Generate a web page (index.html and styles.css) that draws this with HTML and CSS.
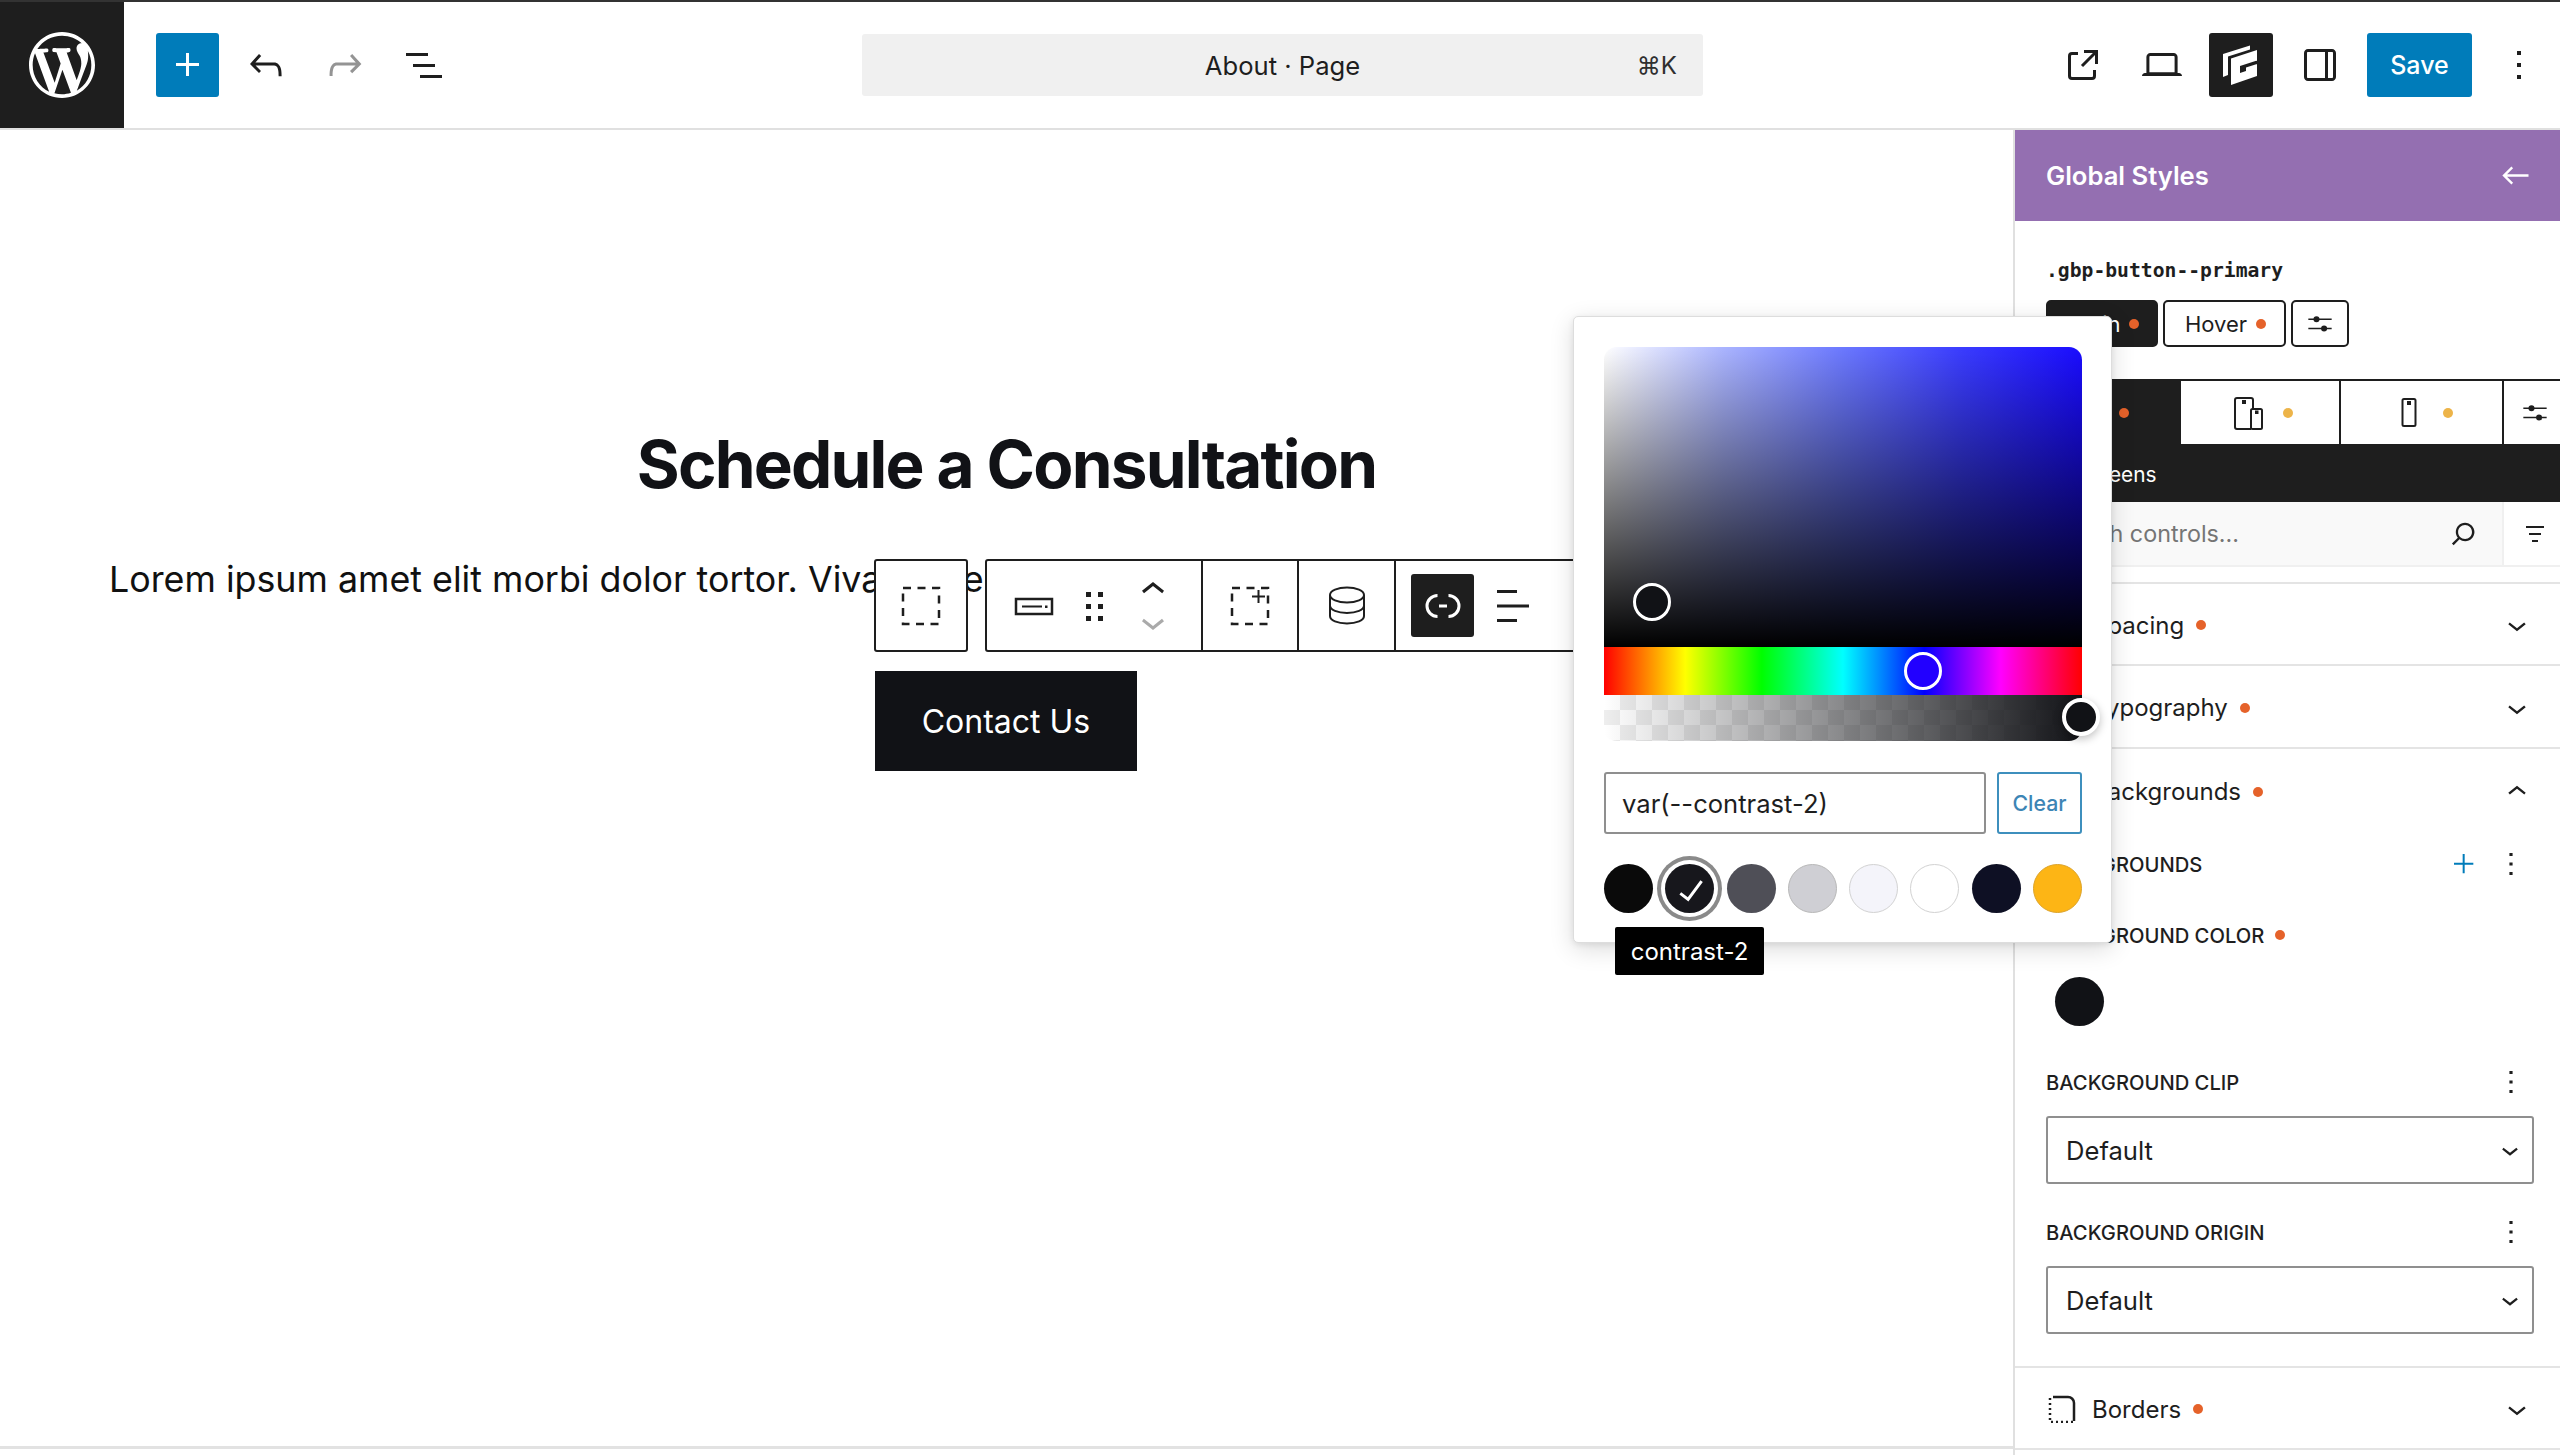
FILE: index.html
```html
<!DOCTYPE html>
<html lang="en">
<head>
<meta charset="utf-8">
<title>About · Page</title>
<link rel="stylesheet" href="styles.css">
</head>
<body>
<svg class="defs" width="0" height="0" aria-hidden="true">
  <symbol id="chev-down" viewBox="0 0 24 24"><path d="M17.5 11.6L12 16l-5.5-4.4.9-1.2L12 14l4.5-3.6 1 1.2z"/></symbol>
  <symbol id="chev-up" viewBox="0 0 24 24"><path d="M6.5 12.4L12 8l5.5 4.4-.9 1.2L12 10l-4.5 3.6-1-1.2z"/></symbol>
  <symbol id="more" viewBox="0 0 24 24"><path d="M13 19h-2v-2h2v2zm0-6h-2v-2h2v2zm0-6h-2V5h2v2z"/></symbol>
  <symbol id="sliders" viewBox="0 0 24 24"><path d="M2 7.2h20v1.300H2zM2 15.200h20v1.300H2z"/><circle cx="9" cy="7.850" r="2.600"/><circle cx="15.500" cy="15.850" r="2.600"/></symbol>
</svg>

<header class="topbar">
  <div class="wp-logo">
    <svg class="logo-mark" viewBox="0 0 20 20"><path d="M20 10c0-5.51-4.49-10-10-10C4.48 0 0 4.49 0 10c0 5.52 4.48 10 10 10 5.51 0 10-4.48 10-10zM7.78 15.37L4.37 6.22c.55-.02 1.17-.08 1.17-.08.5-.06.44-1.13-.06-1.11 0 0-1.45.11-2.37.11-.18 0-.37 0-.58-.01C4.12 2.69 6.87 1.11 10 1.11c2.33 0 4.45.87 6.05 2.34-.68-.11-1.65.39-1.65 1.58 0 .74.45 1.36.9 2.1.35.61.55 1.36.55 2.46 0 1.49-1.4 5-1.4 5l-3.03-8.37c.54-.02.82-.17.82-.17.5-.05.44-1.25-.06-1.22 0 0-1.44.12-2.38.12-.87 0-2.33-.12-2.33-.12-.5-.03-.56 1.2-.06 1.22l.92.08 1.26 3.41zM17.41 10c.24-.64.74-1.87.43-4.25.7 1.29 1.05 2.71 1.05 4.25 0 3.29-1.73 6.24-4.4 7.78.97-2.59 1.94-5.2 2.92-7.78zM6.1 18.09C3.12 16.65 1.11 13.53 1.11 10c0-1.3.23-2.48.72-3.59C3.25 10.3 4.67 14.2 6.1 18.09zm4.03-6.63l2.58 6.98c-.86.29-1.76.45-2.71.45-.79 0-1.57-.11-2.29-.33.81-2.38 1.62-4.74 2.42-7.1z"/></svg>
  </div>
  <div class="bar-left">
    <button class="ib ib-blue"><svg class="i48" viewBox="0 0 24 24"><path d="M11 12.5V17.5H12.5V12.5H17.5V11H12.5V6H11V11H6V12.5H11Z"/></svg></button>
    <button class="ib"><svg class="i48" viewBox="0 0 24 24"><path d="M18.3 11.7c-.6-.6-1.4-.9-2.3-.9H6.7l2.9-3.3-1.1-1-4.5 5L8.5 16l1-1-2.7-2.7H16c.5 0 .9.2 1.3.5 1 1 1 3.4 1 4.5v.3h1.5v-.2c0-1.5 0-4.3-1.5-5.7z"/></svg></button>
    <button class="ib ib-muted"><svg class="i48" viewBox="0 0 24 24"><path d="M15.6 6.5l-1.1 1 2.9 3.3H8c-.9 0-1.7.3-2.3.9-1.4 1.5-1.4 4.2-1.4 5.6v.2h1.5v-.3c0-1.1 0-3.5 1-4.5.3-.3.7-.5 1.3-.5h9.2L14.5 15l1.1 1.1 4.6-4.6-4.6-5z"/></svg></button>
    <button class="ib"><svg class="i48" viewBox="0 0 24 24"><path d="M3 6h11v1.5H3V6Zm3.5 5.5h11V13h-11v-1.5ZM21 17H10v1.5h11V17Z"/></svg></button>
  </div>
  <div class="doc-bar"><span class="doc-title">About · Page</span><span class="doc-key">⌘K</span></div>
  <div class="bar-right">
    <button class="ib"><svg class="i48" viewBox="0 0 24 24"><path d="M19.5 4.5h-7V6h4.44l-5.97 5.97 1.06 1.06L18 7.06v4.44h1.5v-7Zm-13 1a2 2 0 0 0-2 2v10a2 2 0 0 0 2 2h10a2 2 0 0 0 2-2v-3H17v3a.5.5 0 0 1-.5.5h-10a.5.5 0 0 1-.5-.5v-10a.5.5 0 0 1 .5-.5h3V5.5h-3Z"/></svg></button>
    <button class="ib"><svg class="i48" viewBox="0 0 24 24"><path d="M20.5 16h-.7V8c0-1.1-.9-2-2-2H6.2c-1.1 0-2 .9-2 2v8h-.7c-.8 0-1.5.7-1.5 1.5h20c0-.8-.7-1.5-1.5-1.5zM5.7 8c0-.3.2-.5.5-.5h11.6c.3 0 .5.2.5.5v7.6H5.7V8z"/></svg></button>
    <button class="ib ib-dark"><svg class="i64" viewBox="0 0 64 64"><path d="M14 21 41 12.500V16.500L19 23.500V42L14 44Z"/><path fill-rule="evenodd" d="M22 25.500 48 17V43L22 52ZM31 33V40L37 38V34.500L48 31V27.500Z"/></svg></button>
    <button class="ib"><svg class="i48" viewBox="0 0 24 24"><path fill-rule="evenodd" d="M18 4H6c-1.100 0-2 .9-2 2v12c0 1.100.9 2 2 2h12c1.100 0 2-.9 2-2V6c0-1.100-.9-2-2-2zM6 5.500h8.500v13H6c-.3 0-.5-.2-.5-.5V6c0-.3.2-.5.5-.5zm12.500 12.500c0 .3-.2.5-.5.5h-2v-13h2c.3 0 .5.2.5.5v12z"/></svg></button>
    <button class="save">Save</button>
    <button class="ib"><svg class="i48"><use href="#more"/></svg></button>
  </div>
</header>

<main class="workspace">
  <section class="canvas">
    <h1 class="page-heading">Schedule a Consultation</h1>
    <p class="page-text">Lorem ipsum amet elit morbi dolor tortor. Vivamus eget nulla sed erat dignissim.</p>
    <a class="cta">Contact Us</a>

    <div class="block-toolbar">
      <div class="tb-group tb-parent">
        <svg class="tb-icon line" viewBox="0 0 40 40"><rect x="2" y="2" width="36" height="36" stroke="#1e1e1e" stroke-width="2.500" stroke-dasharray="8 6.500"/></svg>
      </div>
      <div class="tb-group tb-main">
        <div class="tb-cell tb-cell-move">
          <svg class="tb-icon" viewBox="0 0 40 40"><rect class="line" x="2" y="13" width="36" height="15" stroke="#1e1e1e" stroke-width="2.500"/><rect x="8" y="19.500" width="20" height="2"/><rect x="31" y="19.500" width="2.500" height="2.500"/></svg>
          <svg class="tb-icon" viewBox="0 0 40 40"><rect x="12" y="6" width="5" height="5"/><rect x="24" y="6" width="5" height="5"/><rect x="12" y="18" width="5" height="5"/><rect x="24" y="18" width="5" height="5"/><rect x="12" y="30" width="5" height="5"/><rect x="24" y="30" width="5" height="5"/></svg>
          <div class="mover">
            <svg class="mv-icon"><use href="#chev-up"/></svg>
            <svg class="mv-icon mv-off"><use href="#chev-down"/></svg>
          </div>
        </div>
        <div class="tb-cell tb-cell-md">
          <svg class="tb-icon" viewBox="0 0 40 40"><rect class="line" x="2" y="2" width="36" height="36" stroke="#1e1e1e" stroke-width="2.500" stroke-dasharray="8 6.500"/><rect x="22" y="9.500" width="13" height="2"/><rect x="27.500" y="4" width="2" height="13"/></svg>
        </div>
        <div class="tb-cell tb-cell-lg">
          <svg class="tb-icon line" viewBox="0 0 40 40" stroke="#1e1e1e" stroke-width="2"><ellipse cx="20" cy="9" rx="17" ry="7.500"/><path d="M3 9V30c0 4.500 7.500 7.500 17 7.500S37 34.500 37 30V9"/><path d="M3 19.500c0 4.500 7.500 7.500 17 7.500s17-3 17-7.500"/></svg>
        </div>
        <div class="tb-cell tb-cell-end">
          <span class="link-active"><svg class="tb-icon line" viewBox="0 0 40 40" stroke="#fff" stroke-width="3"><path d="M14.500 9.500a10.500 10.500 0 0 0 0 21"/><path d="M25.500 9.500a10.500 10.500 0 0 1 0 21"/><path d="M16 20h8"/></svg></span>
          <svg class="tb-icon" viewBox="0 0 40 40"><rect x="4" y="4" width="20" height="3"/><rect x="4" y="18.500" width="32" height="3"/><rect x="4" y="33" width="20" height="3"/></svg>
        </div>
      </div>
    </div>
  </section>

  <aside class="sidebar">
    <div class="side-head"><span class="side-title">Global Styles</span><svg class="back" viewBox="0 0 24 24"><path d="M20 11.200H6.800l3.700-3.700-1-1L3.900 12l5.600 5.500 1-1-3.700-3.700H20z"/></svg></div>
    <div class="side-meta">
      <div class="selector">.gbp-button--primary</div>
      <div class="state-tabs">
        <span class="state state-main">Main<i class="dot"></i></span>
        <span class="state state-hover">Hover<i class="dot"></i></span>
        <span class="state state-opt"><svg class="i26"><use href="#sliders"/></svg></span>
      </div>
    </div>
    <div class="device-panel">
      <div class="device-tabs">
        <span class="device device-a"><i class="dot"></i></span>
        <span class="device device-b">
          <svg class="dev-icon line" viewBox="0 0 30 34" stroke="#1e1e1e" stroke-width="2"><path d="M19 13V4a2 2 0 0 0-2-2H3a2 2 0 0 0-2 2v27a2 2 0 0 0 2 2h14"/><rect x="17" y="13" width="11" height="20" rx="1.500"/><rect x="9" y="5" width="2" height="2" fill="#1e1e1e"/><rect x="22" y="15.500" width="1.500" height="1.500" fill="#1e1e1e"/></svg>
          <i class="dot dot-y"></i>
        </span>
        <span class="device device-c">
          <svg class="dev-icon line" viewBox="0 0 30 34" stroke="#1e1e1e" stroke-width="2"><rect x="8.500" y="3" width="13" height="27" rx="1.500"/><rect x="14" y="6" width="2" height="2" fill="#1e1e1e"/></svg>
          <i class="dot dot-y"></i>
        </span>
        <span class="device device-d"><svg class="i26"><use href="#sliders"/></svg></span>
      </div>
      <div class="device-label">All Screens</div>
    </div>
    <div class="search-row">
      <div class="search-field"><span class="search-text">Search controls...</span><svg class="search-icon" viewBox="0 0 24 24"><path d="M13 5c-3.300 0-6 2.700-6 6 0 1.400.5 2.700 1.300 3.700l-3.800 3.800 1.100 1.100 3.800-3.800c1 .8 2.300 1.300 3.700 1.300 3.300 0 6-2.700 6-6S16.300 5 13 5zm0 10.500c-2.500 0-4.500-2-4.500-4.500s2-4.500 4.500-4.500 4.500 2 4.500 4.500-2 4.500-4.500 4.500z"/></svg></div>
      <div class="search-filter"><svg class="filter-icon" viewBox="0 0 18 16"><rect width="18" height="2"/><rect x="3" y="7" width="12" height="2"/><rect x="6" y="14" width="6" height="2"/></svg></div>
    </div>
    <div class="panel-row panel-first"><span class="row-name">Spacing</span><i class="dot"></i><svg class="chev"><use href="#chev-down"/></svg></div>
    <div class="panel-row"><span class="row-name">Typography</span><i class="dot"></i><svg class="chev"><use href="#chev-down"/></svg></div>
    <div class="panel-open">
      <div class="panel-row panel-plain"><span class="row-name">Backgrounds</span><i class="dot"></i><svg class="chev"><use href="#chev-up"/></svg></div>
      <div class="fields">
        <div class="label-row label-bgs"><span class="lbl">Backgrounds</span><svg class="add" viewBox="0 0 24 24"><path d="M11 12.500V19H12.500V12.500H19V11H12.500V4.500H11V11H4.500V12.500H11Z"/></svg><svg class="more"><use href="#more"/></svg></div>
        <div class="label-row label-color"><span class="lbl">Background Color</span><i class="dot"></i></div>
        <span class="color-chip"></span>
        <div class="label-row label-clip"><span class="lbl">Background Clip</span><svg class="more"><use href="#more"/></svg></div>
        <div class="select"><span>Default</span><svg class="sel-chev"><use href="#chev-down"/></svg></div>
        <div class="label-row label-origin"><span class="lbl">Background Origin</span><svg class="more"><use href="#more"/></svg></div>
        <div class="select"><span>Default</span><svg class="sel-chev"><use href="#chev-down"/></svg></div>
      </div>
    </div>
    <div class="panel-row panel-borders">
      <svg class="border-icon line" viewBox="0 0 28 28" stroke="#1e1e1e"><path d="M5 2h15a6 6 0 0 1 6 6v18" stroke-width="2.500"/><path d="M2 3v24h24" stroke-width="2.500" stroke-dasharray="2 3"/></svg>
      <span class="row-name">Borders</span><i class="dot"></i><svg class="chev"><use href="#chev-down"/></svg>
    </div>
  </aside>
</main>

<div class="popover">
  <div class="picker">
    <div class="sv"><span class="handle handle-sv"></span></div>
    <div class="hue"><span class="handle handle-hue"></span></div>
    <div class="alpha"><span class="handle handle-alpha"></span></div>
  </div>
  <div class="value-row">
    <div class="value-input">var(--contrast-2)</div>
    <button class="clear">Clear</button>
  </div>
  <div class="swatches">
    <span class="sw sw-1"></span>
    <span class="sw sw-2"><svg class="check" viewBox="0 0 24 24"><path d="M16.700 7.100l-6.300 8.500-3.300-2.500-.9 1.200 4.500 3.400L17.900 8z"/></svg></span>
    <span class="sw sw-3"></span>
    <span class="sw sw-4"></span>
    <span class="sw sw-5"></span>
    <span class="sw sw-6"></span>
    <span class="sw sw-7"></span>
    <span class="sw sw-8"></span>
  </div>
  <div class="tip">contrast-2</div>
</div>
</body>
</html>
```

FILE: styles.css
```css
* { box-sizing: border-box; }
html, body { margin: 0; height: 1455px; overflow: hidden; background: #fff; }
body { font-family: Inter, "Noto Sans", sans-serif; color: #1e1e1e; position: relative; }
.defs { position: absolute; }
button { font: inherit; border: 0; padding: 0; background: none; color: inherit; }
svg { display: block; fill: currentColor; }
svg.line, rect.line { fill: none; }
i { display: block; }

/* top bar */
.topbar { height: 130px; display: flex; align-items: center; border-top: 2px solid #333; border-bottom: 2px solid #e0e0e0; }
.wp-logo { width: 124px; height: 126px; background: #1e1e1e; display: flex; align-items: center; justify-content: center; flex: none; color: #fff; }
.logo-mark { width: 66px; height: 66px; }
.bar-left { display: flex; gap: 15px; margin-left: 32px; align-items: center; }
.ib { width: 64px; height: 64px; display: flex; align-items: center; justify-content: center; border-radius: 3px; flex: none; color: #1e1e1e; }
.ib-blue { width: 63px; background: #007cba; color: #fff; }
.ib-muted { color: #949494; }
.ib-dark { background: #1e1e1e; color: #fff; }
.i48 { width: 48px; height: 48px; }
.i64 { width: 64px; height: 64px; }
.i26 { width: 28px; height: 28px; }
.doc-bar { margin-left: 406px; width: 841px; height: 62px; background: #f0f0f0; border-radius: 3px; display: flex; align-items: center; position: relative; justify-content: center; font-size: 25.6px; }
.doc-key { position: absolute; right: 26px; font-size: 24px; color: #2f2f2f; }
.bar-right { margin-left: auto; padding-right: 9px; display: flex; gap: 15px; align-items: center; }
.save { width: 105px; height: 64px; background: #007cba; color: #fff; border-radius: 3px; font-size: 25px; font-weight: 500; }

/* layout */
.workspace { display: flex; height: 1325px; }
.canvas { flex: 1; position: relative; overflow: hidden; padding-top: 294px; border-bottom: 3px solid #e2e2e2; height: 1319px; }
.page-heading { margin: 0; text-align: center; font-size: 65.6px; line-height: 80px; font-weight: 700; letter-spacing: -1.8px; color: #111216; }
.page-text { margin: 45px 0 0; padding-left: 109px; font: 35.8px/60px Inter, sans-serif; color: #111; white-space: nowrap; }
.cta { display: flex; align-items: center; justify-content: center; width: 262px; height: 100px; margin: 62px 0 0 875px; background: #111216; color: #fff; font-size: 32px; }

/* block toolbar */
.block-toolbar { position: absolute; left: 874px; top: 429px; display: flex; gap: 17px; }
.tb-group { height: 93px; background: #fff; border: 2px solid #1e1e1e; border-radius: 3px; display: flex; align-items: center; }
.tb-parent { width: 94px; justify-content: center; }
.tb-main { width: 640px; }
.tb-cell { height: 100%; display: flex; align-items: center; border-left: 2px solid #1e1e1e; flex: none; }
.tb-cell-move { width: 214px; border-left: 0; padding-left: 27px; gap: 20px; }
.tb-cell-md { width: 96px; justify-content: center; }
.tb-cell-lg { width: 97px; justify-content: center; }
.tb-cell-end { padding-left: 15px; gap: 19px; flex: 1; }
.tb-icon { width: 40px; height: 40px; flex: none; }
.mover { display: flex; flex-direction: column; gap: 0; margin-left: -5px; }
.mv-icon { width: 48px; height: 48px; }
.mv-off { color: #aaa; margin-top: -16px; }
.link-active { width: 63px; height: 63px; background: #1e1e1e; border-radius: 3px; display: flex; align-items: center; justify-content: center; }

/* sidebar */
.sidebar { width: 547px; flex: none; border-left: 2px solid #e0e0e0; overflow: hidden; background: #fff; }
.side-head { height: 91px; background: #946fb1; color: #fff; display: flex; align-items: center; justify-content: space-between; padding: 0 25px 0 31px; }
.side-title { font-size: 25.6px; font-weight: 600; }
.back { width: 39px; height: 39px; }
.side-meta { height: 158px; padding: 35px 0 0 31px; }
.selector { font: 700 19.700px/30px "DejaVu Sans Mono", monospace; }
.state-tabs { display: flex; gap: 5px; margin-top: 14px; }
.state { height: 47px; border: 2px solid #1e1e1e; border-radius: 5px; display: flex; align-items: center; font-size: 22px; flex: none; }
.state-main { width: 112px; background: #1e1e1e; color: #fff; padding-left: 22px; gap: 8px; }
.state-hover { width: 123px; padding-left: 20px; gap: 9px; }
.state-opt { width: 58px; justify-content: center; }
.dot { width: 10px; height: 10px; border-radius: 50%; background: #e5622a; flex: none; }
.dot-y { background: #edb449; }

.device-panel { background: #1e1e1e; height: 123px; color: #fff; }
.device-tabs { height: 65px; display: flex; border-top: 2px solid #1e1e1e; }
.device { background: #fff; display: flex; align-items: center; justify-content: center; flex: none; border-left: 2px solid #1e1e1e; color: #1e1e1e; }
.device-a { width: 164px; background: #1e1e1e; justify-content: flex-end; padding-right: 50px; }
.device-b { width: 160px; gap: 19px; padding-left: 6px; }
.device-c { width: 163px; gap: 19px; padding-left: 4px; }
.device-d { width: 60px; padding-left: 4px; }
.dev-icon { width: 30px; height: 34px; }
.device-label { height: 58px; line-height: 62px; padding-left: 31px; font-size: 20.8px; }

.search-row { height: 65px; display: flex; border-bottom: 2px solid #f0f0f0; }
.search-field { width: 487px; background: #f9f9f9; display: flex; align-items: center; justify-content: space-between; padding: 0 20px 0 31px; }
.search-text { font-size: 23.3px; color: #757575; }
.search-icon { width: 37px; height: 37px; color: #1e1e1e; }
.search-filter { flex: 1; display: flex; align-items: center; justify-content: center; border-left: 2px solid #f0f0f0; padding-left: 6px; }
.filter-icon { width: 18px; height: 16px; }

.panel-row { height: 83px; display: flex; align-items: center; padding: 2px 24px 0 77px; border-bottom: 2px solid #e4e4e4; gap: 12px; }
.panel-first { margin-top: 15px; border-top: 2px solid #e4e4e4; height: 84px; }
.row-name { font-size: 24px; }
.chev { width: 38px; height: 38px; margin-left: auto; }
.panel-plain { border-bottom: 0; }
.panel-open { border-bottom: 2px solid #e4e4e4; height: 619px; }
.fields { padding: 0 26px 0 31px; }
.label-row { height: 40px; display: flex; align-items: center; gap: 11px; }
.lbl { font-size: 20.2px; font-weight: 500; text-transform: uppercase; }
.label-bgs { margin-top: 12px; }
.label-color { margin-top: 31px; }
.label-clip { margin-top: 36px; }
.label-origin { margin-top: 28px; }
.add { width: 32px; height: 32px; color: #007cba; margin-left: auto; }
.more { width: 38px; height: 38px; margin-right: 4px; margin-left: 1px; }
.label-clip .more, .label-origin .more { margin-left: auto; }
.color-chip { display: block; width: 49px; height: 49px; border-radius: 50%; background: #111216; margin: 22px 0 0 9px; }
.select { height: 68px; margin-top: 14px; border: 2px solid #8f8f8f; border-radius: 3px; display: flex; align-items: center; justify-content: space-between; padding: 0 5px 0 18px; font-size: 25.6px; }
.sel-chev { width: 34px; height: 34px; }
.panel-borders { padding-left: 31px; height: 82px; gap: 15px; }
.panel-borders .dot { margin-left: -3px; }
.border-icon { width: 28px; height: 28px; flex: none; margin-right: 1px; margin-left: 2px; }

/* popover */
.popover { position: absolute; left: 1573px; top: 316px; width: 539px; height: 627px; padding: 30px 30px 0; background: #fff; border: 1px solid #ddd; border-radius: 5px; box-shadow: 0 6px 24px rgba(0,0,0,.14), 0 2px 6px rgba(0,0,0,.08); }
.picker { width: 478px; position: relative; }
.sv { height: 300px; border-radius: 13px 13px 0 0; position: relative; background: linear-gradient(to top, #000, transparent), linear-gradient(to right, #fff 0, #aab4ff 25%, #6b78ff 50%, #3a3cff 75%, #1a0cff 100%); }
.hue { height: 48px; position: relative; background: linear-gradient(to right, red 0, #ff0 17%, #0f0 33%, #0ff 50%, #00f 67%, #f0f 83%, red 100%); }
.alpha { height: 46px; position: relative; border-radius: 0 0 13px 13px; background: linear-gradient(to right, rgba(17,18,22,0), #111216), repeating-conic-gradient(#eeeeee 0 25%, #fff 0 50%) 0 0 / 32px 30px; }
.handle { position: absolute; width: 38px; height: 38px; border: 3px solid #fff; border-radius: 50%; }
.handle-sv { left: 29px; top: 236px; background: #111216; }
.handle-hue { left: 300px; top: 5px; background: #2200ff; }
.handle-alpha { left: 458px; top: 3px; width: 38px; background: #111216; border-width: 4px; box-shadow: 0 3px 8px rgba(0,0,0,.25); }
.value-row { display: flex; justify-content: space-between; margin-top: 31px; width: 478px; }
.value-input { width: 382px; height: 62px; border: 2px solid #8f8f8f; border-radius: 3px; padding-left: 16px; display: flex; align-items: center; font-size: 25.6px; }
.clear { width: 85px; height: 62px; border: 2px solid #3d8fbd; border-radius: 3px; color: #3d85b5; font-size: 21.3px; font-weight: 500; }
.swatches { display: flex; justify-content: space-between; width: 478px; margin-top: 30px; }
.sw { width: 49px; height: 49px; border-radius: 50%; display: flex; align-items: center; justify-content: center; flex: none; }
.sw-1 { background: #0a0a0a; }
.sw-2 { background: #17171c; color: #fff; box-shadow: 0 0 0 4px #fff, 0 0 0 8px #8a8a8a; }
.sw-3 { background: #4f4f57; }
.sw-4 { background: #cfcfd4; border: 1px solid #b8b8b8; }
.sw-5 { background: #f4f4fa; border: 1px solid #d2d2d2; }
.sw-6 { background: #fff; border: 1px solid #d2d2d2; }
.sw-7 { background: #0e1024; }
.sw-8 { background: #fdb515; border: 1px solid #dca32a; }
.check { width: 48px; height: 48px; flex: none; margin: 3px 0 0 3px; }
.tip { position: absolute; left: 41px; top: 610px; width: 149px; height: 48px; background: #000; color: #fff; border-radius: 2px; display: flex; align-items: center; justify-content: center; font-size: 24px; z-index: 2; }
```
